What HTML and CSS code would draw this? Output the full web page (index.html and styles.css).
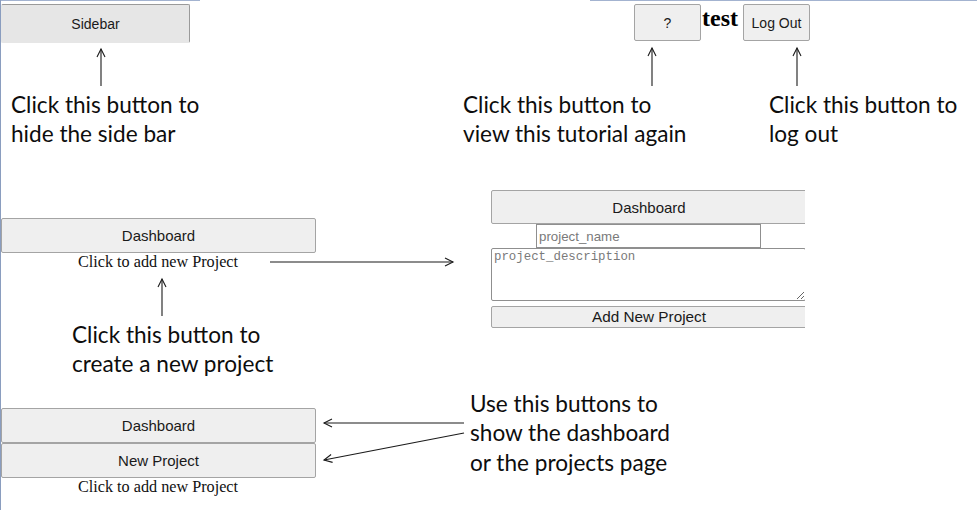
FILE: index.html
```html
<!DOCTYPE html>
<html>
<head>
<meta charset="utf-8">
<link rel="stylesheet" href="styles.css">
</head>
<body>
<div class="canvas">
  <div class="shot shot-sidebar">
    <button class="btn btn-sidebar">Sidebar</button>
  </div>

  <div class="shot shot-header">
    <button class="btn btn-small">?</button>
    <span class="user">test</span>
    <button class="btn btn-small">Log Out</button>
  </div>

  <div class="shot shot-nav-one">
    <button class="btn btn-nav">Dashboard</button>
    <span class="caption">Click to add new Project</span>
  </div>

  <div class="shot shot-form">
    <div class="form-inner">
      <button class="btn btn-nav btn-form-dash">Dashboard</button>
      <div class="name-row"><input class="name-input" placeholder="project_name"></div>
      <textarea class="desc" placeholder="project_description"></textarea>
      <button class="btn btn-add">Add New Project</button>
    </div>
  </div>

  <div class="shot shot-nav-two">
    <button class="btn btn-nav">Dashboard</button>
    <button class="btn btn-nav">New Project</button>
    <span class="caption">Click to add new Project</span>
  </div>

  <p class="note note-sidebar">Click this button to<br>hide the side bar</p>
  <p class="note note-help">Click this button to<br>view this tutorial again</p>
  <p class="note note-logout">Click this button to<br>log out</p>
  <p class="note note-create">Click this button to<br>create a new project</p>
  <p class="note note-nav">Use this buttons to<br>show the dashboard<br>or the projects page</p>

  <svg class="arrows" width="977" height="510" viewBox="0 0 977 510">
    <g fill="none" stroke="#1a1a1a" stroke-width="1.1">
      <line x1="101" y1="86" x2="101" y2="49"/>
      <polyline points="97,57 101,49 105,57"/>
      <line x1="652" y1="86" x2="652" y2="48"/>
      <polyline points="648,56 652,48 656,56"/>
      <line x1="797" y1="86" x2="797" y2="48"/>
      <polyline points="793,56 797,48 801,56"/>
      <line x1="270" y1="262" x2="453" y2="262"/>
      <polyline points="445,258 453,262 445,266"/>
      <line x1="162" y1="316" x2="162" y2="279"/>
      <polyline points="158,287 162,279 166,287"/>
      <line x1="464" y1="423" x2="324" y2="423"/>
      <polyline points="332,419 324,423 332,427"/>
      <line x1="464" y1="433" x2="324" y2="460"/>
      <polyline points="331.1,454.5 324,460 332.6,462.4"/>
    </g>
  </svg>
</div>
</body>
</html>
```

FILE: styles.css
```css
* { box-sizing: border-box; }

html, body {
  margin: 0;
  padding: 0;
  background: #ffffff;
}

.canvas {
  position: relative;
  width: 977px;
  height: 510px;
  overflow: hidden;
  background:
    linear-gradient(to right, #a3b3d0 0 200px, transparent 200px 590px, #a3b3d0 590px) top left / 100% 1px no-repeat,
    #ffffff;
  box-shadow: inset 1px 0 0 #8a9dbf;
}

.shot {
  position: absolute;
  display: flex;
}

.btn {
  margin: 0;
  padding: 0;
  font-family: "Liberation Sans", Arial, sans-serif;
  color: #1a1a1a;
  background: #efefef;
  border: 1px solid #a4a4a4;
  border-radius: 2px;
  display: flex;
  align-items: center;
  justify-content: center;
}

/* top-left sidebar toggle */
.shot-sidebar {
  left: 1px;
  top: 4px;
}
.btn-sidebar {
  width: 189px;
  height: 39px;
  font-size: 14px;
  background: #e6e6e6;
  border-color: #9a9a9a;
  border-bottom-color: #e6e6e6;
  border-left-color: #e6e6e6;
}

/* header fragment */
.shot-header {
  left: 634px;
  top: 4px;
  align-items: flex-start;
}
.btn-small {
  width: 67px;
  height: 37px;
  font-size: 14px;
}
.user {
  font-family: "Liberation Serif", "Times New Roman", serif;
  font-weight: bold;
  font-size: 24px;
  line-height: 28px;
  margin: 0 5px 0 1px;
  color: #000;
}

/* nav fragments */
.shot-nav-one {
  left: 1px;
  top: 218px;
  width: 315px;
  flex-direction: column;
  align-items: center;
}
.shot-nav-two {
  left: 1px;
  top: 408px;
  width: 315px;
  flex-direction: column;
  align-items: center;
}
.btn-nav {
  width: 315px;
  height: 35px;
  font-size: 15px;
}
.caption {
  font-family: "Liberation Serif", "Times New Roman", serif;
  font-size: 16.2px;
  line-height: 19px;
  margin-left: -1px;
  color: #111;
}

/* add-project form fragment */
.shot-form {
  left: 491px;
  top: 190px;
  width: 314px;
  overflow: hidden;
}
.form-inner {
  width: 316px;
  flex: none;
  display: flex;
  flex-direction: column;
}
.btn-form-dash {
  width: 316px;
  height: 34px;
}
.name-row {
  display: flex;
  padding-left: 45px;
}
.name-input {
  width: 225px;
  height: 24px;
  margin: 0;
  padding: 0 2px;
  border: 1px solid #8f8f8f;
  font-family: "Liberation Sans", Arial, sans-serif;
  font-size: 13.3px;
  background: #fff;
}
.name-input::placeholder { color: #7a7a7a; }
.desc {
  width: 315px;
  height: 53px;
  margin: 0;
  padding: 1px 2px;
  border: 1px solid #8f8f8f;
  border-radius: 2px;
  font-family: "Liberation Mono", "DejaVu Sans Mono", monospace;
  font-size: 12.4px;
  resize: both;
  display: block;
}
.desc::placeholder { color: #7a7a7a; }
.btn-add {
  width: 316px;
  height: 22px;
  margin-top: 5px;
  font-size: 15.3px;
}

/* callout notes */
.note {
  position: absolute;
  margin: 0;
  font-family: "Lato", "Open Sans", sans-serif;
  font-size: 22.6px;
  line-height: 29.3px;
  color: #0d0d0d;
  white-space: nowrap;
}
.note-sidebar { left: 11px; top: 90px; }
.note-help { left: 463px; top: 90px; }
.note-logout { left: 769px; top: 90px; }
.note-create { left: 72px; top: 320px; }
.note-nav { left: 470px; top: 389px; }

.arrows {
  position: absolute;
  left: 0;
  top: 0;
  pointer-events: none;
}
```
